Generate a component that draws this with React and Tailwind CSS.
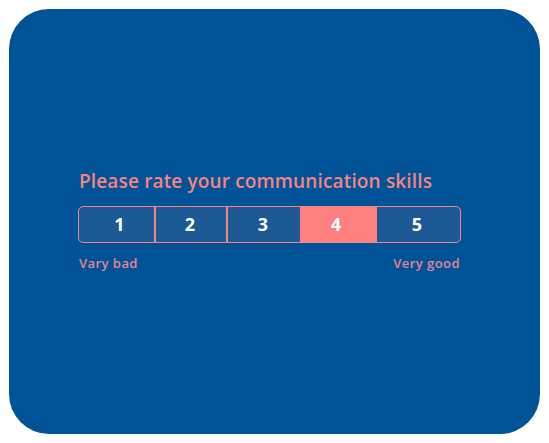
export default function App() {
  const cells = [
    { n: "1", cls: "w-[75px] pl-[6px]" },
    { n: "2", cls: "w-[72px] border-l-2 border-[#f78383] pr-[2px]" },
    { n: "3", cls: "w-[74px] border-l-2 border-[#f78383] pr-[2px]" },
    { n: "4", cls: "w-[77px] bg-[#ff8080] pr-[5px]" },
    { n: "5", cls: "w-[83px] pr-[3px]" },
  ];
  return (
    <div className="w-[549px] h-[443px] bg-white p-[9px]" style={{ fontFamily: '"Open Sans", "Liberation Sans", sans-serif' }}>
      <div className="w-[531px] h-[425px] rounded-[40px] bg-[#005397] pl-[69px] pt-[159px]">
        <div className="text-[19px] leading-[26px] font-semibold tracking-[0.15px] text-[#f78383] pl-[1px]">Please rate your communication skills</div>
        <div className="mt-[12px] flex w-[383px] h-[37px] rounded-[5px] border border-[#f78383] overflow-hidden bg-[#1d5994]">
          {cells.map((c) => (
            <div
              key={c.n}
              className={`${c.cls} h-full flex items-center justify-center text-white font-bold text-[18px]`}
            >
              {c.n}
            </div>
          ))}
        </div>
        <div className="mt-[12px] w-[383px] flex justify-between text-[13px] leading-[16px] font-semibold text-[#e98394] pl-[1px] pr-[1px]">
          <span className="tracking-[0.45px]">Vary bad</span>
          <span className="tracking-[0.45px]">Very good</span>
        </div>
      </div>
    </div>
  );
}
